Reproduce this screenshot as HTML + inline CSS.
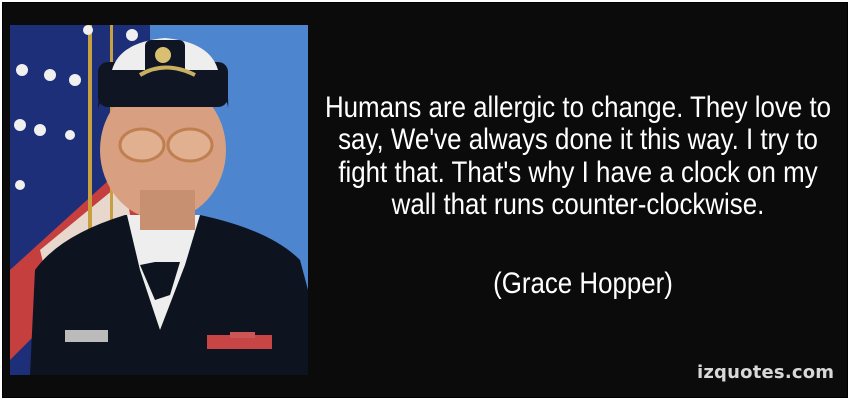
<!DOCTYPE html>
<html><head><style>
html,body{margin:0;padding:0;background:#000;}
.wrap{position:relative;width:850px;height:400px;background:#0b0b0b;overflow:hidden;box-sizing:border-box;border:2px solid #fff;outline:1px solid #000;outline-offset:-3px}
.q{position:absolute;left:276px;width:600px;top:90px;text-align:center;color:#fff;font-family:"Liberation Sans",sans-serif;font-size:30px;line-height:32.3px;white-space:nowrap;transform:scaleX(0.863);transform-origin:center top}
.a{position:absolute;left:281px;width:600px;top:265px;text-align:center;color:#fff;font-family:"Liberation Sans",sans-serif;font-size:30px;transform:scaleX(0.863)}
.logo{position:absolute;left:695px;top:360px;color:#d8d8d8;font-family:"DejaVu Sans",sans-serif;font-weight:bold;font-size:18px;letter-spacing:0.2px}
</style></head><body>
<div class="wrap">
<svg style="position:absolute;left:8px;top:23px" width="300" height="352" viewBox="10 25 300 352">
<rect x="10" y="25" width="298" height="350" fill="#4d86cf"/>
<rect x="10" y="25" width="140" height="350" fill="#1e2f7a"/>
<polygon points="10,270 120,170 150,180 150,240 40,330 10,360" fill="#c63f3f"/>
<polygon points="40,250 125,180 130,215 50,290" fill="#e8d7cc"/>
<rect x="88" y="25" width="4" height="210" fill="#c9a041"/>
<rect x="110" y="25" width="3" height="200" fill="#c9a041"/>
<g fill="#f0f0f0">
<circle cx="22" cy="70" r="6"/><circle cx="50" cy="75" r="6"/><circle cx="75" cy="80" r="6"/>
<circle cx="20" cy="125" r="6"/><circle cx="40" cy="130" r="6"/><circle cx="70" cy="135" r="5"/>
<circle cx="20" cy="185" r="5"/><circle cx="88" cy="30" r="5"/><circle cx="132" cy="35" r="6"/>
</g>
<rect x="190" y="220" width="118" height="60" fill="#4d86cf"/>
<path d="M30 375 L35 270 Q60 235 125 215 L200 215 Q270 230 300 260 L308 290 L308 375 Z" fill="#0e1320"/>
<polygon points="127,215 160,215 200,215 185,265 160,330 140,270" fill="#eeeeee"/>
<polygon points="140,265 155,262 180,262 170,295 155,300" fill="#0e1320"/>
<ellipse cx="163" cy="150" rx="63" ry="70" fill="#d8a080"/>
<rect x="140" y="190" width="55" height="40" fill="#c79070"/>
<path d="M98 110 Q98 50 165 45 Q232 50 228 110 Q230 85 165 80 Q100 85 98 110 Z" fill="#101524"/>
<rect x="98" y="62" width="130" height="45" rx="10" fill="#101524"/>
<path d="M112 70 Q120 42 165 38 Q210 42 218 70 Z" fill="#eeeeee"/>
<rect x="145" y="40" width="40" height="40" rx="6" fill="#101524"/>
<path d="M140 75 Q165 60 195 75" stroke="#c8b060" stroke-width="4" fill="none"/>
<circle cx="163" cy="55" r="8" fill="#d8c070"/>
<ellipse cx="142" cy="145" rx="22" ry="16" fill="#e0b090" stroke="#c07f50" stroke-width="3"/>
<ellipse cx="190" cy="145" rx="22" ry="16" fill="#e0b090" stroke="#c07f50" stroke-width="3"/>
<rect x="65" y="330" width="43" height="12" fill="#bbbbbb"/>
<rect x="207" y="335" width="65" height="14" fill="#c84545"/>
<rect x="230" y="332" width="25" height="6" fill="#cc5555"/>
<circle cx="161" cy="393" r="5" fill="#c8a040"/>
</svg>
<div class="q">Humans are allergic to change. They love to<br>say, We've always done it this way. I try to<br>fight that. That's why I have a clock on my<br>wall that runs counter-clockwise.</div>
<div class="a">(Grace Hopper)</div>
<div class="logo">izquotes.com</div>
</div>
</body></html>
